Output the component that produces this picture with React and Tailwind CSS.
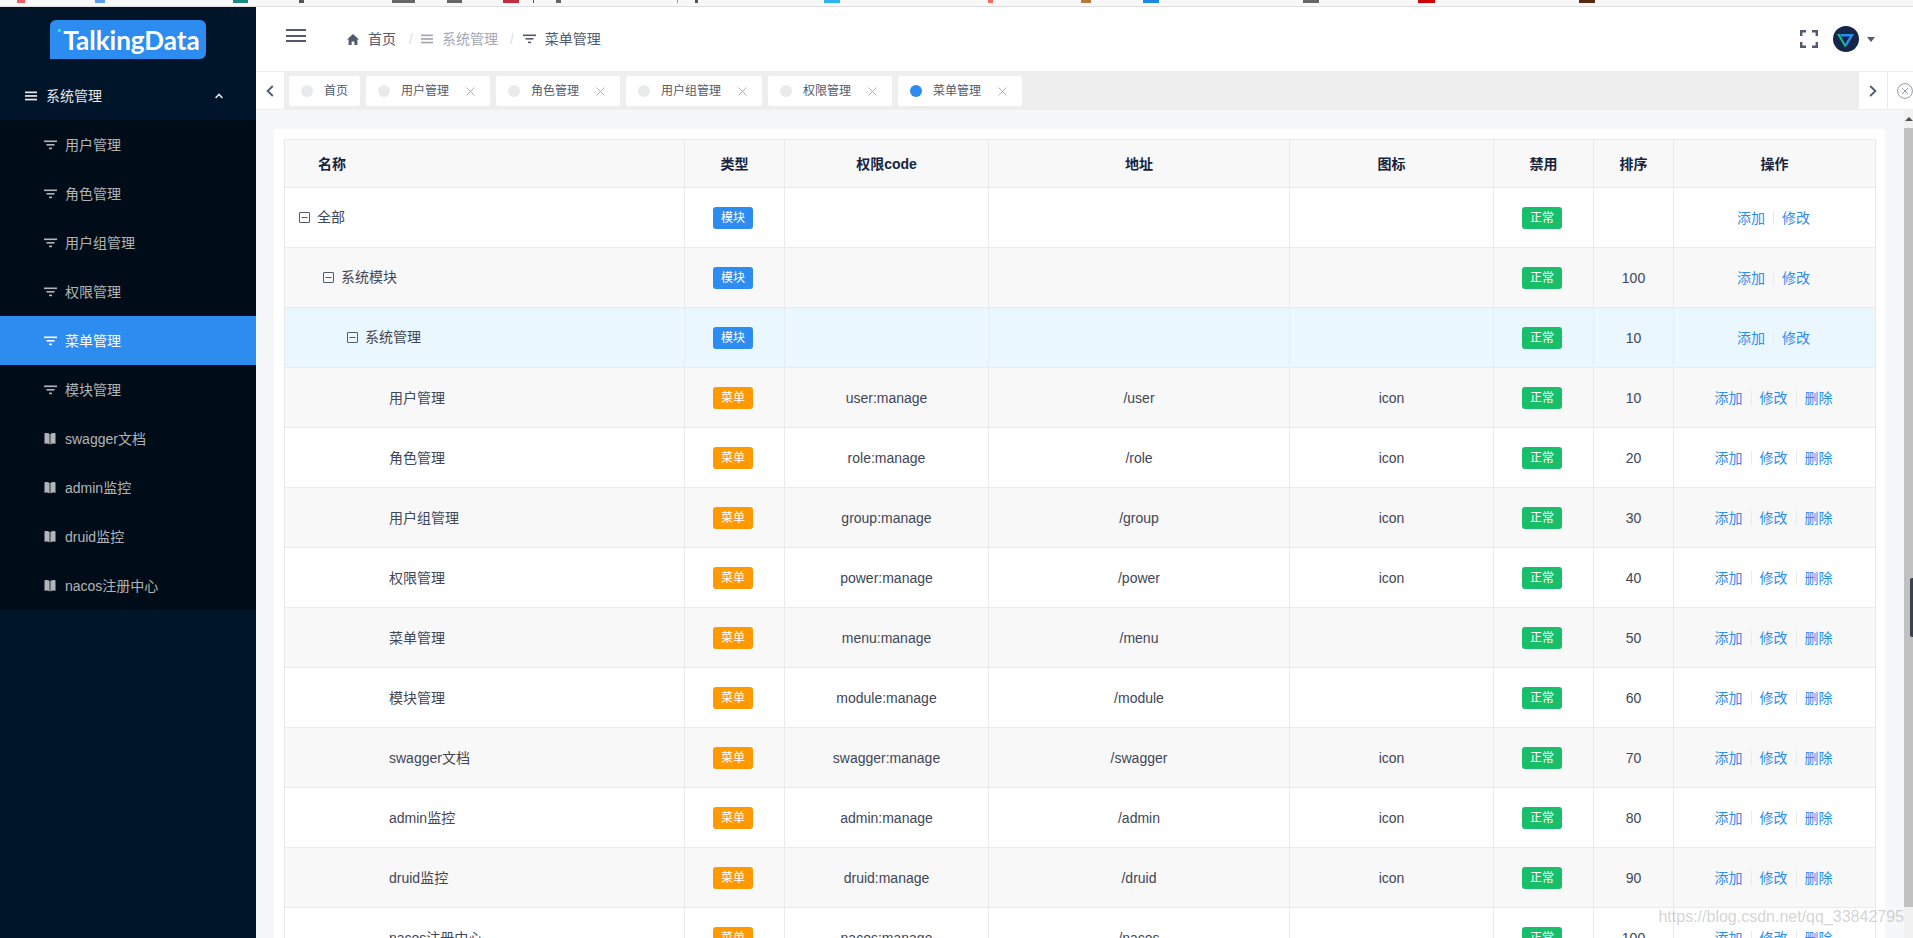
const font = { fontFamily: '"Liberation Sans", "Noto Sans CJK SC", sans-serif' }

const FilterIcon = ({ className = '' }) => (
    <svg className={className} width="13" height="10" viewBox="0 0 13 10" fill="currentColor">
        <rect x="0" y="0.5" width="13" height="1.6" />
        <rect x="2.5" y="4" width="8" height="1.6" />
        <rect x="5" y="7.6" width="3" height="1.6" />
    </svg>
)

const ListIcon = ({ className = '' }) => (
    <svg className={className} width="12" height="10" viewBox="0 0 12 10" fill="currentColor">
        <rect x="0" y="0.5" width="12" height="1.7" />
        <rect x="0" y="4.1" width="12" height="1.7" />
        <rect x="0" y="7.7" width="12" height="1.7" />
    </svg>
)

const BookIcon = () => (
    <svg width="12" height="13" viewBox="0 0 12 13" fill="currentColor">
        <path d="M0.5 1.4C2.2 0.6 4.2 0.8 5.6 1.9V12.4C4.2 11.3 2.2 11.1 0.5 11.9Z" />
        <path d="M11.5 1.4C9.8 0.6 7.8 0.8 6.4 1.9V12.4C7.8 11.3 9.8 11.1 11.5 11.9Z" />
    </svg>
)

const CloseIcon = () => (
    <svg width="9" height="9" viewBox="0 0 9 9" fill="none" stroke="#a3a8b2" strokeWidth="0.9">
        <path d="M0.5 0.5L8.5 8.5M8.5 0.5L0.5 8.5" />
    </svg>
)

const ExpandIcon = () => (
    <svg className="shrink-0" width="11" height="11" viewBox="0 0 11 11" fill="none" stroke="#515a6e" strokeWidth="1">
        <rect x="0.5" y="0.5" width="10" height="10" rx="0.5" />
        <path d="M2.5 5.5H8.5" />
    </svg>
)

const Logo = () => (
    <div className="relative ml-[50px] mt-[13px] flex h-[39px] w-[156px] items-center justify-center rounded-[6px] rounded-bl-none bg-[#2d8cf0] pl-[7px]">
        <span className="absolute left-[8px] top-[9px] h-[3px] w-[3px] bg-[#2ee6b6]"></span>
        <span className="text-[26px] font-bold leading-none text-white" style={{ fontFamily: 'Lato, sans-serif' }}>
            TalkingData
        </span>
    </div>
)

const subMenus = [
    { name: '用户管理', icon: 'filter' },
    { name: '角色管理', icon: 'filter' },
    { name: '用户组管理', icon: 'filter' },
    { name: '权限管理', icon: 'filter' },
    { name: '菜单管理', icon: 'filter', active: true },
    { name: '模块管理', icon: 'filter' },
    { name: 'swagger文档', icon: 'book' },
    { name: 'admin监控', icon: 'book' },
    { name: 'druid监控', icon: 'book' },
    { name: 'nacos注册中心', icon: 'book' },
]

const Sidebar = () => (
    <aside className="flex h-full w-[256px] shrink-0 flex-col bg-[#001529]">
        <div className="h-[64px] shrink-0">
            <Logo />
        </div>
        <div className="flex h-[49px] shrink-0 items-center pl-[25px] pr-[33px] text-sm text-white/90">
            <ListIcon />
            <span className="ml-[9px] flex-1">系统管理</span>
            <svg width="8" height="6" viewBox="0 0 8 6" fill="none" stroke="currentColor" strokeWidth="1.6">
                <path d="M0.6 5L4 1.4L7.4 5" />
            </svg>
        </div>
        <div className="bg-[#000c17]">
            {subMenus.map((item) => (
                <div
                    key={item.name}
                    className={`flex h-[49px] items-center pl-[44px] text-sm ${
                        item.active ? 'bg-[#2d8cf0] text-white' : 'text-white/70'
                    }`}>
                    {item.icon === 'filter' ? <FilterIcon /> : <BookIcon />}
                    <span className={item.icon === 'filter' ? 'ml-[8px]' : 'ml-[9px]'}>{item.name}</span>
                </div>
            ))}
        </div>
    </aside>
)

const Header = () => (
    <header className="flex h-[64px] shrink-0 items-center bg-white pl-[30px] text-sm text-[#515a6e]">
        <div className="mb-[1px] flex w-[20px] flex-col gap-[3.5px] self-start pt-[22px]">
            <span className="h-[2px] bg-[#515a6e]"></span>
            <span className="h-[2px] bg-[#515a6e]"></span>
            <span className="h-[2px] bg-[#515a6e]"></span>
        </div>
        <nav className="ml-[41px] flex items-center">
            <svg width="12" height="11" viewBox="0 0 12 11" fill="#515a6e">
                <path d="M6 0L12 5.6H10.4V11H7.4V7.4H4.6V11H1.6V5.6H0Z" />
            </svg>
            <span className="ml-[9px]">首页</span>
            <span className="ml-[13px] text-[#dcdee2]">/</span>
            <ListIcon className="ml-[8px] text-[#a3a8b2]" />
            <span className="ml-[9px] text-[#a3a8b2]">系统管理</span>
            <span className="ml-[12px] text-[#dcdee2]">/</span>
            <FilterIcon className="ml-[9px]" />
            <span className="ml-[9px]">菜单管理</span>
        </nav>
        <div className="ml-auto flex items-center pr-[38px]">
            <svg width="18" height="18" viewBox="0 0 18 18" fill="none" stroke="#515a6e" strokeWidth="2.4">
                <path d="M1.2 6V1.2H6M12 1.2H16.8V6M16.8 12V16.8H12M6 16.8H1.2V12" />
            </svg>
            <svg className="ml-[15px]" width="26" height="26" viewBox="0 0 26 26">
                <circle cx="13" cy="13" r="13" fill="#14264a" />
                <path d="M7 8H21L13.5 20.5L12 18L16.8 10.4H8.4Z" fill="#2d8cf0" />
                <path d="M4 8H6.6L13 19.5L12 21.5Z" fill="#19be8b" />
            </svg>
            <span className="ml-[8px] h-0 w-0 border-x-[4.5px] border-t-[5px] border-x-transparent border-t-[#515a6e]"></span>
        </div>
    </header>
)

const tabs = [
    { name: '首页', fixed: true },
    { name: '用户管理' },
    { name: '角色管理' },
    { name: '用户组管理' },
    { name: '权限管理' },
    { name: '菜单管理', active: true },
]

const TabsBar = () => (
    <div className="flex h-[39px] shrink-0 border-y border-[#eeeeee] bg-white">
        <div className="flex w-[28px] shrink-0 items-center justify-center text-[#515a6e]">
            <svg width="8" height="12" viewBox="0 0 8 12" fill="none" stroke="currentColor" strokeWidth="1.8">
                <path d="M6.8 1L1.6 6L6.8 11" />
            </svg>
        </div>
        <div className="flex flex-1 gap-[6px] bg-[#eeeeee] pl-[5px] pt-[4px]">
            {tabs.map((tab) => (
                <div
                    key={tab.name}
                    className="flex h-[30px] items-center rounded-[3px] bg-white pl-[12px] text-xs text-[#515a6e]">
                    <span
                        className={`h-[12px] w-[12px] rounded-full ${
                            tab.active ? 'bg-[#2d8cf0]' : 'bg-[#e8eaec]'
                        }`}></span>
                    <span className="ml-[11px]">{tab.name}</span>
                    {tab.fixed ? (
                        <span className="w-[12px]"></span>
                    ) : (
                        <span className="ml-[17px] mr-[15px] flex">
                            <CloseIcon />
                        </span>
                    )}
                </div>
            ))}
        </div>
        <div className="flex w-[28px] shrink-0 items-center justify-center text-[#515a6e]">
            <svg width="8" height="12" viewBox="0 0 8 12" fill="none" stroke="currentColor" strokeWidth="1.8">
                <path d="M1.2 1L6.4 6L1.2 11" />
            </svg>
        </div>
        <div className="flex w-[26px] shrink-0 items-center border-l border-[#e8eaec] pl-[9px]">
            <svg className="shrink-0" width="16" height="16" viewBox="0 0 16 16" fill="none" stroke="#8a919f" strokeWidth="0.9">
                <circle cx="8" cy="8" r="7.4" />
                <path d="M5 5L11 11M11 5L5 11" />
            </svg>
        </div>
    </div>
)

const Tag = ({ color, children }) => (
    <span className={`-ml-[3px] mt-[1px] inline-flex h-[22px] w-10 items-center justify-center rounded-[3px] text-xs text-white ${color}`}>
        {children}
    </span>
)

const treeRows = [
    { name: '全部', pad: 'pl-[14px]', tree: true, kind: '模块' },
    { name: '系统模块', pad: 'pl-[38px]', tree: true, kind: '模块', sort: 100 },
    { name: '系统管理', pad: 'pl-[62px]', tree: true, kind: '模块', sort: 10, current: true },
    { name: '用户管理', code: 'user:manage', url: '/user', icon: 'icon', sort: 10, remove: true },
    { name: '角色管理', code: 'role:manage', url: '/role', icon: 'icon', sort: 20, remove: true },
    { name: '用户组管理', code: 'group:manage', url: '/group', icon: 'icon', sort: 30, remove: true },
    { name: '权限管理', code: 'power:manage', url: '/power', icon: 'icon', sort: 40, remove: true },
    { name: '菜单管理', code: 'menu:manage', url: '/menu', sort: 50, remove: true },
    { name: '模块管理', code: 'module:manage', url: '/module', sort: 60, remove: true },
    { name: 'swagger文档', code: 'swagger:manage', url: '/swagger', icon: 'icon', sort: 70, remove: true },
    { name: 'admin监控', code: 'admin:manage', url: '/admin', icon: 'icon', sort: 80, remove: true },
    { name: 'druid监控', code: 'druid:manage', url: '/druid', icon: 'icon', sort: 90, remove: true },
    { name: 'nacos注册中心', code: 'nacos:manage', url: '/nacos', sort: 100, remove: true },
]

const headers = ['名称', '类型', '权限code', '地址', '图标', '禁用', '排序', '操作']
const cell = 'border border-[#e8eaec] text-center align-middle'

const Actions = ({ remove }) => (
    <div className="flex items-center justify-center pr-[2px] text-[#2d8cf0]">
        <span>添加</span>
        <span className="mx-2 h-[14px] w-px bg-[#e8eaec]"></span>
        <span>修改</span>
        {remove && (
            <>
                <span className="mx-2 h-[14px] w-px bg-[#e8eaec]"></span>
                <span>删除</span>
            </>
        )}
    </div>
)

const MenuTable = () => (
    <table className="w-[1591px] table-fixed border-collapse text-sm text-[#3f4656]">
        <colgroup>
            <col className="w-[400px]" />
            <col className="w-[100px]" />
            <col className="w-[204px]" />
            <col className="w-[301px]" />
            <col className="w-[204px]" />
            <col className="w-[100px]" />
            <col className="w-[80px]" />
            <col className="w-[202px]" />
        </colgroup>
        <thead>
            <tr className="h-[48px] bg-[#f8f8f9] text-[#17233d]">
                {headers.map((title, index) => (
                    <th key={title} className={`${cell} font-bold ${index === 0 ? 'pl-[33px] text-left' : ''}`}>
                        {title}
                    </th>
                ))}
            </tr>
        </thead>
        <tbody>
            {treeRows.map((row, index) => (
                <tr
                    key={row.name + index}
                    className={`h-[60px] ${
                        row.current ? 'bg-[#ebf7ff]' : index % 2 === 1 ? 'bg-[#f8f8f9]' : 'bg-white'
                    }`}>
                    <td className={`${cell} text-left ${row.tree ? row.pad : 'pl-[104px]'}`}>
                        {row.tree ? (
                            <div className="mb-[1px] flex items-center gap-[7px]">
                                <ExpandIcon />
                                <span>{row.name}</span>
                            </div>
                        ) : (
                            row.name
                        )}
                    </td>
                    <td className={cell}>
                        <Tag color={row.kind ? 'bg-[#2d8cf0]' : 'bg-[#ff9900]'}>{row.kind || '菜单'}</Tag>
                    </td>
                    <td className={cell}>{row.code}</td>
                    <td className={cell}>{row.url}</td>
                    <td className={cell}>{row.icon}</td>
                    <td className={cell}>
                        <Tag color="bg-[#19be6b]">正常</Tag>
                    </td>
                    <td className={cell}>{row.sort}</td>
                    <td className={cell}>
                        <Actions remove={row.remove} />
                    </td>
                </tr>
            ))}
        </tbody>
    </table>
)

const Scrollbar = () => (
    <div className="flex h-full w-[9px] shrink-0 flex-col bg-[#f1f1f1]">
        <div className="flex h-[18px] shrink-0 items-center justify-center">
            <span className="h-0 w-0 border-x-[4px] border-b-[4px] border-x-transparent border-b-[#505050]"></span>
        </div>
        <div className="h-[779px] shrink-0 bg-[#c1c1c1]"></div>
    </div>
)

const slivers = [
    'ml-[17px] w-[8px] bg-[#f0606a]',
    'ml-[70px] w-[10px] bg-[#5b9bf0]',
    'ml-[128px] w-[15px] bg-[#1a8a80]',
    'ml-[51px] w-[5px] bg-[#555555]',
    'ml-[88px] w-[23px] bg-[#666666]',
    'ml-[32px] w-[15px] bg-[#666666]',
    'ml-[41px] w-[16px] bg-[#c62c36]',
    'ml-[14px] w-[1px] bg-[#555555]',
    'ml-[22px] w-[5px] bg-[#666666]',
    'ml-[116px] w-[1px] bg-[#999999]',
    'ml-[17px] w-[3px] bg-[#555555]',
    'ml-[126px] w-[16px] bg-[#29b6f0]',
    'ml-[148px] w-[5px] bg-[#ee7060]',
    'ml-[88px] w-[10px] bg-[#b87a3a]',
    'ml-[52px] w-[16px] bg-[#1e88e5]',
    'ml-[144px] w-[16px] bg-[#666666]',
    'ml-[99px] w-[17px] bg-[#cc0000]',
    'ml-[144px] w-[16px] bg-[#5a2a10]',
]

const BrowserStrip = () => (
    <div className="flex h-[7px] shrink-0 items-start border-b border-[#dedede] bg-[#f8f8f8]">
        {slivers.map((sliver) => (
            <span key={sliver} className={`h-[3px] shrink-0 ${sliver}`}></span>
        ))}
    </div>
)

const App = () => (
    <div className="relative flex h-[938px] w-[1913px] flex-col overflow-hidden bg-white" style={font}>
        <BrowserStrip />
        <div className="flex min-h-0 flex-1">
            <Sidebar />
            <div className="flex min-w-0 flex-1 flex-col">
                <Header />
                <TabsBar />
                <div className="flex min-h-0 flex-1">
                    <main className="min-w-0 flex-1 overflow-hidden bg-[#f5f7f9] pl-[18px] pr-[19px] pt-[19px]">
                        <div className="h-full bg-white p-[10px]">
                            <MenuTable />
                        </div>
                    </main>
                    <Scrollbar />
                </div>
            </div>
        </div>
        <span className="absolute bottom-[9px] right-[9px] text-[16px] text-[#8f8f8f]/40">
            https://blog.csdn.net/qq_33842795
        </span>
        <span className="absolute right-0 top-[578px] h-[59px] w-[3px] rounded-l-[2px] bg-[#3b4050]"></span>
    </div>
)

export default App
